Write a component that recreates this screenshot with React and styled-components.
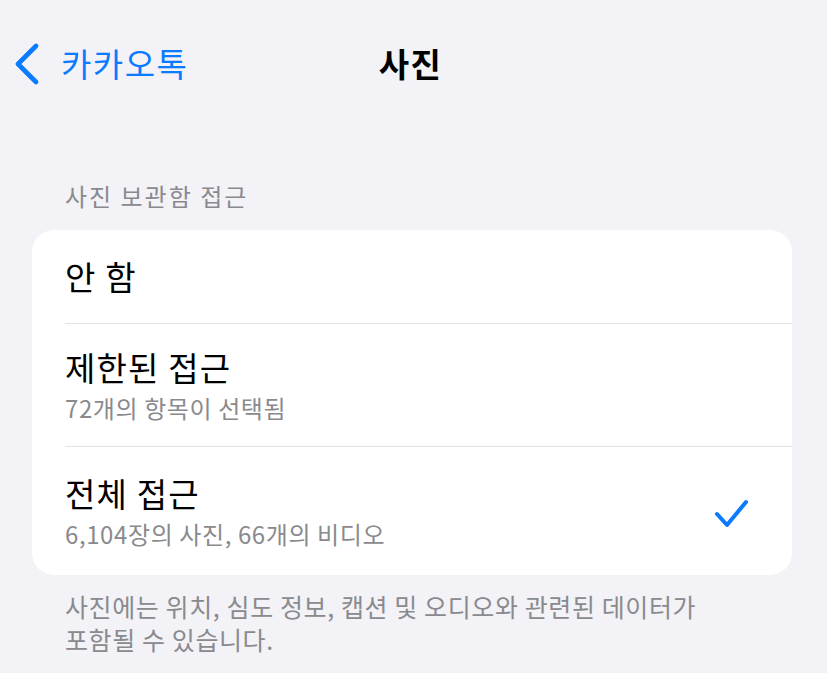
import React from 'react';
import styled, { createGlobalStyle } from 'styled-components';

const GlobalStyle = createGlobalStyle`
    html, body {
        margin: 0;
        padding: 0;
        background: #f2f2f7;
    }
    body {
        font-family: "Noto Sans CJK KR", "Noto Sans", sans-serif;
        -webkit-font-smoothing: antialiased;
    }
`;

const options = [
    { title: '안 함', h: 94 },
    { title: '제한된 접근', sub: '72개의 항목이 선택됨', h: 124 },
    { title: '전체 접근', sub: '6,104장의 사진, 66개의 비디오', checked: true, h: 128 },
];

const App = () => {
    return (
        <>
            <GlobalStyle />
            <Page>
                <NavBar>
                    <Back>
                        <svg width="28" height="42" viewBox="0 0 28 42">
                            <path d="M22 3 L4 21 L22 39" fill="none" stroke="#0a7aff" strokeWidth="4.6" strokeLinecap="round" strokeLinejoin="round" />
                        </svg>
                        <BackLabel>카카오톡</BackLabel>
                    </Back>
                    <NavTitle>사진</NavTitle>
                    <span />
                </NavBar>

                <SectionHeader>사진 보관함 접근</SectionHeader>
                <Card>
                    { options.map((o, i) => (
                        <Row key={ o.title } last={ i === options.length - 1 } h={ o.h }>
                            <RowText>
                                <RowTitle>{ o.title }</RowTitle>
                                { o.sub ? <RowSub>{ o.sub }</RowSub> : null }
                            </RowText>
                            { o.checked ? (
                                <Check width="36" height="32" viewBox="0 0 36 32">
                                    <path d="M3 16 L13 27 L32 4" fill="none" stroke="#0a7aff" strokeWidth="4" strokeLinecap="round" strokeLinejoin="round" />
                                </Check>
                            ) : null }
                        </Row>
                    )) }
                </Card>
                <Footer>
                    사진에는 위치, 심도 정보, 캡션 및 오디오와 관련된 데이터가<br />
                    포함될 수 있습니다.
                </Footer>
            </Page>
        </>
    );
};

export default App;

const Page = styled.div`
    width: 827px;
    height: 673px;
    overflow: hidden;
    background: #f2f2f7;
`;

const NavBar = styled.div`
    height: 128px;
    display: grid;
    grid-template-columns: 1fr auto 1fr;
    align-items: center;
    padding: 0 20px 0 14px;
    box-sizing: border-box;
`;

const Back = styled.div`
    display: flex;
    align-items: center;
    gap: 19px;
    color: #0a7aff;
`;

const BackLabel = styled.span`
    font-size: 33px;
    line-height: 40px;
    letter-spacing: 1.5px;
    margin-top: -2px;
`;

const NavTitle = styled.div`
    font-size: 33px;
    line-height: 40px;
    letter-spacing: 1.5px;
    font-weight: 700;
    color: #000;
    margin-top: -2px;
`;

const SectionHeader = styled.div`
    margin: 52px 0 0 65px;
    font-size: 24px;
    line-height: 32px;
    letter-spacing: 2px;
    color: #8a8a8e;
`;

const Card = styled.div`
    margin: 18px 35px 0 32px;
    background: #fff;
    border-radius: 22px;
    overflow: hidden;
`;

const Row = styled.div`
    margin-left: 33px;
    padding-right: 42px;
    height: ${ p => p.h - (p.last ? 0 : 1.5) }px;
    display: flex;
    align-items: center;
    justify-content: space-between;
    border-bottom: ${ p => (p.last ? 'none' : '1.5px solid #e3e3e6') };
`;

const RowText = styled.div`
    display: flex;
    flex-direction: column;
    gap: 6px;
`;

const RowTitle = styled.div`
    font-size: 33px;
    line-height: 40px;
    letter-spacing: 1.2px;
    color: #000;
`;

const RowSub = styled.div`
    font-size: 24px;
    line-height: 30px;
    letter-spacing: 0.6px;
    color: #8a8a8e;
`;

const Check = styled.svg`
    margin-top: 6px;
`;

const Footer = styled.div`
    margin: 15px 0 0 65px;
    font-size: 25px;
    line-height: 33px;
    letter-spacing: 0.6px;
    color: #8a8a8e;
`;
